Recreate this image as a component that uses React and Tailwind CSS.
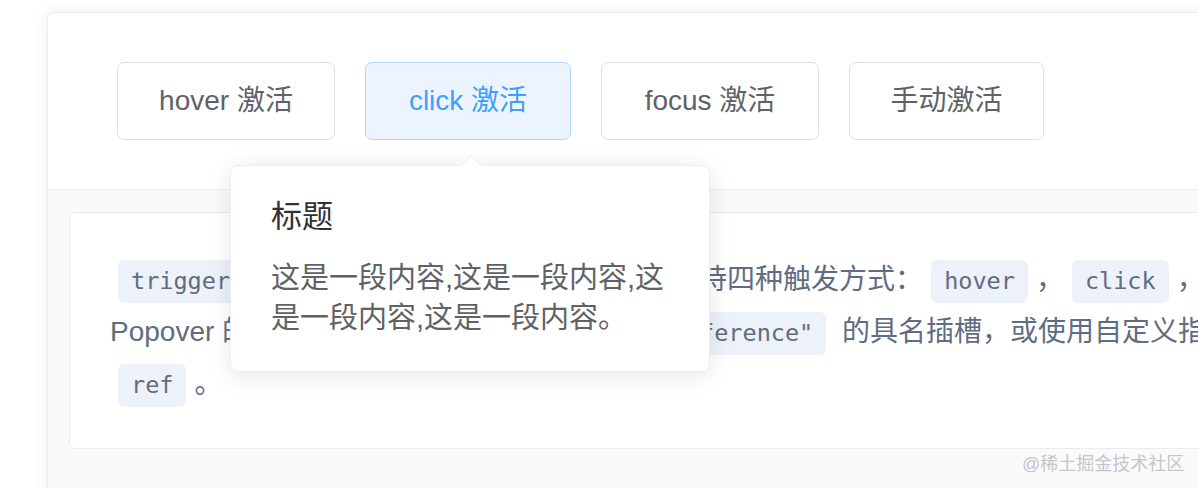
import React from 'react';

const sans = { fontFamily: '"Liberation Sans", "Noto Sans CJK SC", sans-serif' };
const mono = { fontFamily: '"DejaVu Sans Mono", "Liberation Mono", monospace' };

function Code({ children }) {
  return (
    <span
      className="inline-block align-middle mx-[8px] px-[13px] h-[43px] leading-[43px] rounded-[6px] bg-[#edf1f9] text-[23.5px] text-[#5e6d82]"
      style={mono}
    >
      {children}
    </span>
  );
}

function TriggerButton({ label, width, active }) {
  return (
    <button
      className={`flex items-center justify-center h-[78px] rounded-[7px] border text-[28px] ${
        active
          ? 'bg-[#ecf5ff] border-[#b3d8ff] text-[#409eff]'
          : 'bg-white border-[#dcdfe6] text-[#606266]'
      }`}
      style={{ width }}
    >
      {label}
    </button>
  );
}

export default function App() {
  const buttons = [
    { label: 'hover 激活', width: 218 },
    { label: 'click 激活', width: 206, active: true },
    { label: 'focus 激活', width: 218 },
    { label: '手动激活', width: 195 },
  ];

  return (
    <div className="relative w-full h-[488px] overflow-hidden bg-white" style={sans}>
      {/* demo block */}
      <div className="ml-[47px] mt-[12px] w-[1300px] border border-[#ebebeb] rounded-[6px] bg-white shadow-[0_0_16px_0_rgba(0,0,0,0.07)]">
        <div className="h-[176px] pt-[49px] pl-[69px] flex items-start gap-[30px]">
          {buttons.map((b) => (
            <TriggerButton key={b.label} {...b} />
          ))}
        </div>

        {/* meta */}
        <div className="bg-[#fafafa] border-t border-[#eaeefb] pt-[22px] pl-[21px] pb-[60px] rounded-b-[6px]">
          <div className="bg-white border border-[#ebebeb] rounded-[6px] pl-[40px] pt-[41px] pb-[38px] text-[28px] leading-[52px] text-[#5e6d82]">
            <div className="whitespace-nowrap h-[52px]">
              <Code>trigger</Code>属性用于设置何时触发 Popover，支持四种触发方式：<Code>hover</Code>，<Code>click</Code>，<Code>focus</Code> 和 <Code>manual</Code>。对于触发
            </div>
            <div className="whitespace-nowrap h-[52px]">
              Popover 的元素，有两种写法：使用 <Code>slot="reference"</Code> 的具名插槽，或使用自定义指令 <Code>v-popover</Code> 指向 Popover 的索引
            </div>
            <div className="whitespace-nowrap h-[52px]">
              <Code>ref</Code>。
            </div>
          </div>
        </div>
      </div>

      {/* popover */}
      <div className="absolute left-[230px] top-[165px] w-[480px] bg-white border border-[#ebeef5] rounded-[8px] shadow-[0_4px_24px_0_rgba(0,0,0,0.1)] px-[40px] pt-[35px] pb-[33px]">
        <div className="absolute left-[232px] top-[-8px] w-[16px] h-[16px] rotate-45 bg-white border-t border-l border-[#ebeef5]" />
        <div className="text-[31px] leading-[32px] text-[#303133] mb-[25px]">标题</div>
        <div className="text-[29px] leading-[40px] text-[#606266] whitespace-nowrap">
          这是一段内容,这是一段内容,这
          <br />
          是一段内容,这是一段内容。
        </div>
      </div>

      {/* watermark */}
      <div className="absolute left-[1022px] top-[452px] text-[18px] leading-[24px] text-[#c4c6cc]">
        @稀土掘金技术社区
      </div>
    </div>
  );
}
